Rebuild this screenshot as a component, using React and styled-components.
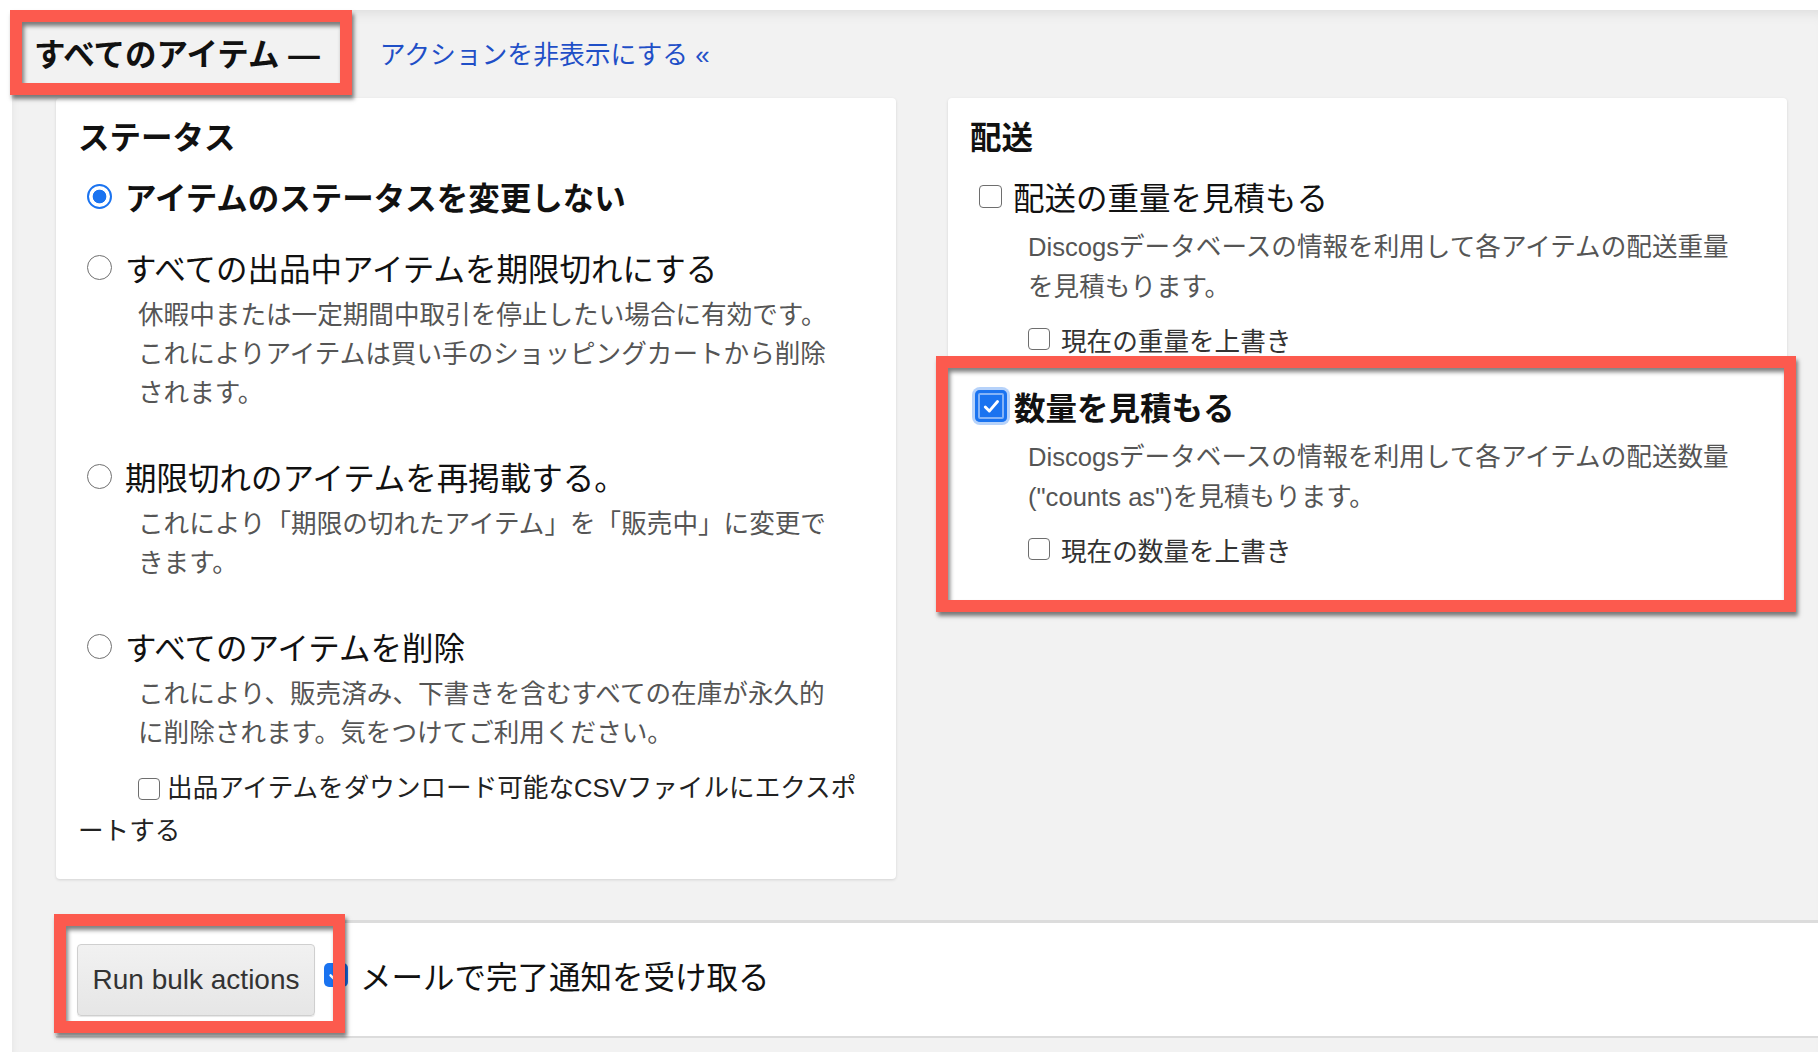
import React from "react";
import styled, { createGlobalStyle } from "styled-components";

const GlobalStyle = createGlobalStyle`
  html, body {
    margin: 0;
    background: #fff;
  }
  body {
    font-family: "Liberation Sans", "Noto Sans CJK JP", sans-serif;
    color: #111;
  }
`;

const blue = "#1a73f0";
const red = "#fc5a4e";

const Page = styled.div`
  position: relative;
  width: 1818px;
  height: 1052px;
  overflow: hidden;
  background: #fff;
`;

const Panel = styled.div`
  margin: 10px 0 0 12px;
  height: 1042px;
  background: #f2f2f2;
  box-shadow: inset 0 12px 14px -10px rgba(0, 0, 0, 0.1),
    inset 8px 0 10px -8px rgba(0, 0, 0, 0.06);
  display: flex;
  flex-direction: column;
`;

const Header = styled.div`
  display: flex;
  align-items: center;
  gap: 60px;
  height: 78px;
  padding: 6px 0 0 22px;
`;

const TabTitle = styled.h2`
  margin: 0;
  font-size: 31.5px;
  font-weight: 700;
  line-height: 40px;
  color: #111;
`;

const HideLink = styled.a`
  font-size: 25.8px;
  line-height: 40px;
  color: #1f4fc7;
  text-decoration: none;
  cursor: pointer;
`;

const Columns = styled.div`
  display: flex;
  align-items: flex-start;
  gap: 52px;
  margin: 4px 0 0 44px;
`;

const Card = styled.section`
  box-sizing: border-box;
  width: ${(p) => p.$width}px;
  background: #fff;
  border-radius: 4px;
  box-shadow: 0 1px 3px rgba(0, 0, 0, 0.13);
  padding: 20px 22px ${(p) => p.$bottom}px;
`;

const CardTitle = styled.h3`
  margin: 0 0 16px;
  font-size: 31.5px;
  font-weight: 700;
  line-height: 40px;
  color: #111;
`;

const Group = styled.div`
  display: flex;
  flex-direction: column;
  margin-bottom: ${(p) => p.$gap ?? 27}px;
`;

const OptionRow = styled.label`
  display: flex;
  align-items: center;
  height: 44px;
  font-size: 31.5px;
  font-weight: ${(p) => (p.$bold ? 700 : 400)};
  color: #111;
  white-space: nowrap;
`;

const Radio = styled.span`
  box-sizing: border-box;
  flex: none;
  width: 25px;
  height: 25px;
  margin: 0 13px 0 9px;
  border-radius: 50%;
  border: ${(p) => (p.$on ? `2.5px solid ${blue}` : "1.6px solid #707070")};
  background: ${(p) =>
    p.$on ? `radial-gradient(circle, ${blue} 0 6.5px, #fff 7.2px)` : "#fff"};
`;

const Box = styled.span`
  box-sizing: border-box;
  flex: none;
  display: inline-block;
  width: ${(p) => p.$size}px;
  height: ${(p) => p.$size}px;
  border-radius: 4px;
  border: 1.6px solid #6e6e6e;
  background: #fff;
  vertical-align: -3px;
`;

const CheckedBox = styled.span`
  box-sizing: border-box;
  flex: none;
  display: inline-flex;
  align-items: center;
  justify-content: center;
  width: ${(p) => p.$size}px;
  height: ${(p) => p.$size}px;
  border-radius: 5px;
  background: ${blue};
  box-shadow: ${(p) =>
    p.$focus
      ? `0 0 0 3px rgba(110, 165, 245, 0.5), inset 0 0 0 3px ${blue}, inset 0 0 0 5px #84b3f7`
      : "none"};
`;

const Desc = styled.p`
  margin: ${(p) => p.$top}px 0 0;
  padding-left: ${(p) => p.$indent}px;
  max-width: 712px;
  font-size: 25.6px;
  line-height: ${(p) => p.$lh ?? 39}px;
  color: #555;
  line-break: loose;
`;

const SubRow = styled.label`
  display: flex;
  align-items: center;
  gap: 11px;
  height: 42px;
  margin: 11px 0 0 58px;
  font-size: 25.6px;
  color: #333;
`;

const ExportLine = styled.p`
  margin: 0;
  text-indent: 60px;
  font-size: 25.6px;
  line-height: 43px;
  color: #222;
  line-break: loose;
`;

const Bar = styled.div`
  display: flex;
  align-items: center;
  margin: 41px 0 0 44px;
  padding: 21px;
  padding-bottom: 20px;
  background: #fff;
  border-top: 3px solid #dcdcdc;
  border-bottom: 2px solid #dcdcdc;
`;

const RunButton = styled.button`
  box-sizing: border-box;
  width: 238px;
  height: 72px;
  margin-right: 9px;
  padding: 0;
  border: 1px solid #cfcfcf;
  border-radius: 4px;
  background: linear-gradient(#f1f1f1, #e6e6e6);
  box-shadow: 0 1px 1px rgba(0, 0, 0, 0.1);
  font-family: "Liberation Sans", sans-serif;
  font-size: 28px;
  color: #333;
  cursor: pointer;
`;

const BarCheck = styled.span`
  display: inline-flex;
  margin-bottom: 10px;
`;

const BarLabel = styled.span`
  margin: 0 0 10px 12px;
  font-size: 31.5px;
  color: #111;
`;

const Frame = styled.div`
  position: absolute;
  box-sizing: border-box;
  left: ${(p) => p.$x}px;
  top: ${(p) => p.$y}px;
  width: ${(p) => p.$w}px;
  height: ${(p) => p.$h}px;
  border: 12px solid ${red};
  box-shadow: 2px 4px 4px rgba(0, 0, 0, 0.5), inset 2px 4px 4px rgba(0, 0, 0, 0.5);
  pointer-events: none;
`;

const Tick = ({ size }) => (
  <svg width={size} height={size} viewBox="0 0 24 24">
    <path d="M5.5 12.5l4.2 4.3 8.6-10" fill="none" stroke="#fff" strokeWidth="3" strokeLinecap="round" strokeLinejoin="round" />
  </svg>
);

const statusOptions = [
  { label: "アイテムのステータスを変更しない", on: true, gap: 27 },
  {
    label: "すべての出品中アイテムを期限切れにする",
    desc: "休暇中または一定期間中取引を停止したい場合に有効です。これによりアイテムは買い手のショッピングカートから削除されます。",
    gap: 41,
  },
  {
    label: "期限切れのアイテムを再掲載する。",
    desc: "これにより「期限の切れたアイテム」を「販売中」に変更できます。",
    gap: 41,
  },
  {
    label: "すべてのアイテムを削除",
    desc: "これにより、販売済み、下書きを含むすべての在庫が永久的に削除されます。気をつけてご利用ください。",
    gap: 14,
  },
];

const App = () => {
  return (
    <Page>
      <GlobalStyle />
      <Panel>
        <Header>
          <TabTitle>すべてのアイテム —</TabTitle>
          <HideLink>アクションを非表示にする «</HideLink>
        </Header>

        <Columns>
          <Card $width={840} $bottom={26}>
            <CardTitle>ステータス</CardTitle>
            {statusOptions.map((o) => (
              <Group key={o.label} $gap={o.gap}>
                <OptionRow $bold={o.on}>
                  <Radio $on={o.on} />
                  {o.label}
                </OptionRow>
                {o.desc && (
                  <Desc $top={7} $indent={60}>
                    {o.desc}
                  </Desc>
                )}
              </Group>
            ))}
            <ExportLine>
              <Box $size={22} /> 出品アイテムをダウンロード可能なCSVファイルにエクスポートする
            </ExportLine>
          </Card>

          <Card $width={839} $bottom={37}>
            <CardTitle>配送</CardTitle>
            <Group $gap={24}>
              <OptionRow>
                <Box $size={23} style={{ margin: "0 11px 0 9px" }} />
                配送の重量を見積もる
              </OptionRow>
              <Desc $top={9} $indent={58} $lh={40}>
                Discogsデータベースの情報を利用して各アイテムの配送重量を見積もります。
              </Desc>
              <SubRow>
                <Box $size={22} />
                現在の重量を上書き
              </SubRow>
            </Group>
            <Group $gap={0}>
              <OptionRow $bold>
                <CheckedBox $size={32} $focus style={{ margin: "0 7px 0 5px" }}>
                  <Tick size={23} />
                </CheckedBox>
                数量を見積もる
              </OptionRow>
              <Desc $top={9} $indent={58} $lh={40}>
                Discogsデータベースの情報を利用して各アイテムの配送数量("counts as")を見積もります。
              </Desc>
              <SubRow>
                <Box $size={22} />
                現在の数量を上書き
              </SubRow>
            </Group>
          </Card>
        </Columns>

        <Bar>
          <RunButton>Run bulk actions</RunButton>
          <BarCheck>
            <CheckedBox $size={24}>
              <Tick size={20} />
            </CheckedBox>
          </BarCheck>
          <BarLabel>メールで完了通知を受け取る</BarLabel>
        </Bar>
      </Panel>

      <Frame $x={10} $y={10} $w={342} $h={85} />
      <Frame $x={936} $y={356} $w={860} $h={256} />
      <Frame $x={54} $y={914} $w={291} $h={119} />
    </Page>
  );
};

export default App;
